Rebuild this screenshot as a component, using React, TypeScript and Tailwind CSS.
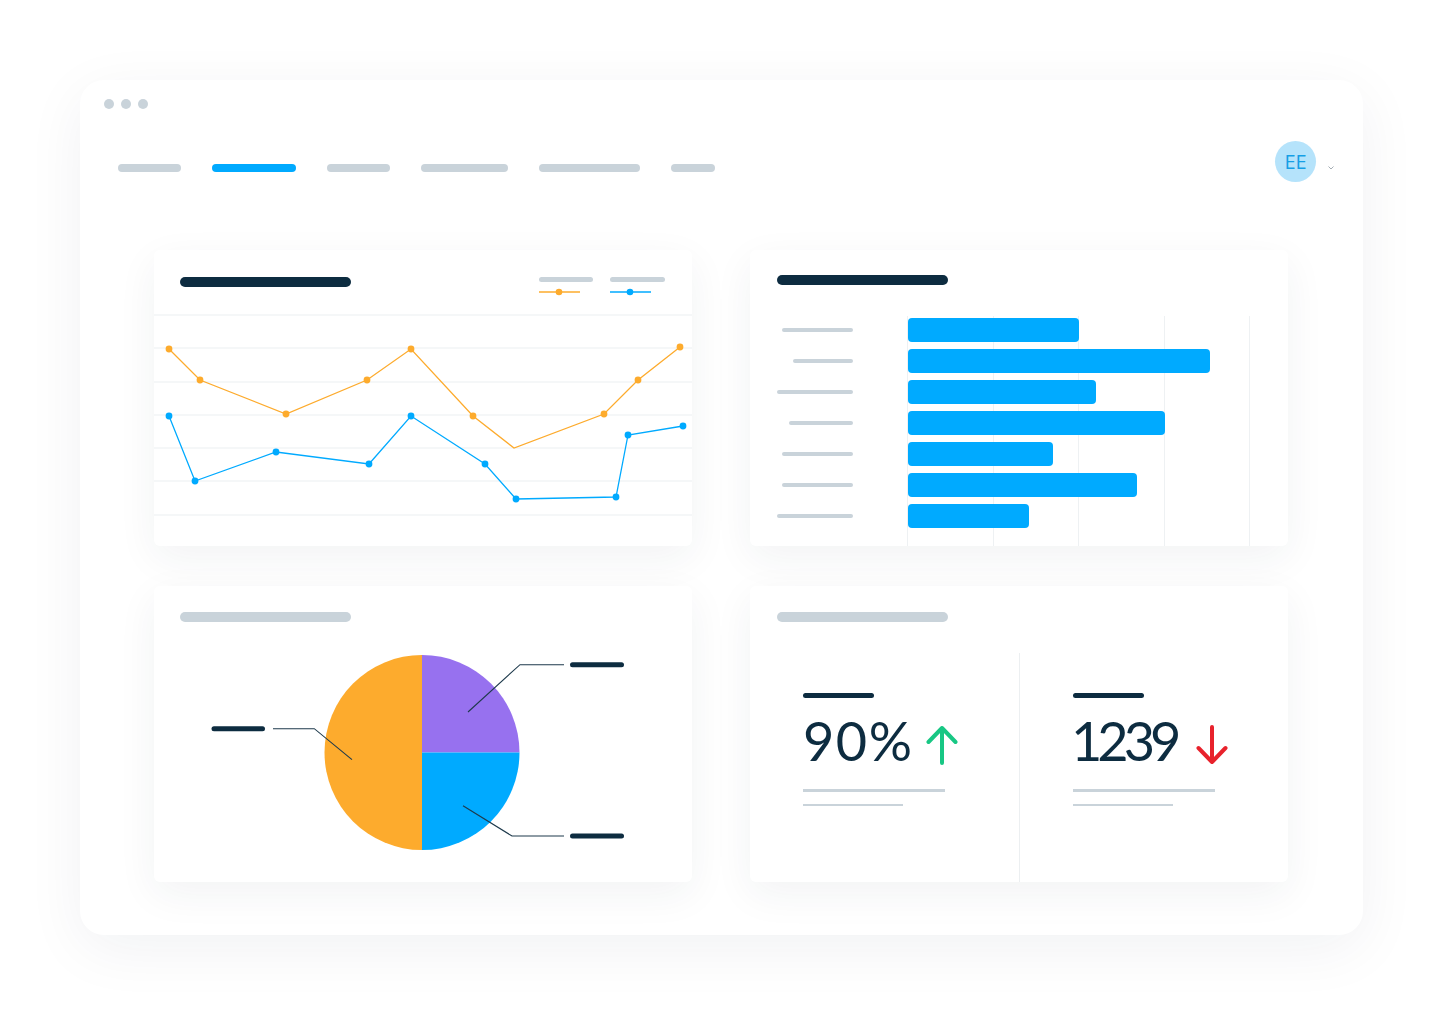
import React from "react"

const navy = "#0d2c40"
const gray = "#c9d3da"

const navBars = [63, 84, 63, 87, 101, 44]

const orange = [
  [169, 349], [200, 380], [286, 414], [367, 380], [411, 349],
  [473, 416], [514, 448], [604, 414], [638, 380], [680, 347],
]
const blue = [
  [169, 416], [195, 481], [276, 452], [369, 464], [411, 416],
  [485, 464], [516, 499], [616, 497], [628, 435], [683, 426],
]

const bars = [
  { label: 71, value: 171 },
  { label: 60, value: 302 },
  { label: 76, value: 188 },
  { label: 64, value: 257 },
  { label: 71, value: 145 },
  { label: 71, value: 229 },
  { label: 76, value: 121 },
]

function Card({ children, className = "" }: { children: React.ReactNode; className?: string }) {
  return (
    <div className={"relative h-[296px] rounded-md bg-white shadow-[0_12px_40px_rgba(30,50,70,0.06)] " + className}>
      {children}
    </div>
  )
}

function LineCard() {
  const pts = (arr: number[][]) => arr.map((p) => p.join(",")).join(" ")
  return (
    <Card className="overflow-hidden">
      <div className="flex h-[59px] items-start justify-between pl-[26px] pr-[27px] pt-[27px]">
        <div className="h-[10px] w-[171px] rounded-full" style={{ background: navy }} />
        <div className="flex gap-[17px]">
          <div className="flex flex-col gap-[6px]">
            <div className="h-[5px] w-[54px] rounded-full bg-[#c9d3da]" />
            <svg width="41" height="8" viewBox="0 0 41 8">
              <line x1="0" y1="4" x2="41" y2="4" stroke="#fdab2d" strokeWidth="1.3" />
              <circle cx="20" cy="4" r="3.3" fill="#fdab2d" />
            </svg>
          </div>
          <div className="flex flex-col gap-[6px]">
            <div className="h-[5px] w-[55px] rounded-full bg-[#c9d3da]" />
            <svg width="41" height="8" viewBox="0 0 41 8">
              <line x1="0" y1="4" x2="41" y2="4" stroke="#00aaff" strokeWidth="1.3" />
              <circle cx="20" cy="4" r="3.3" fill="#00aaff" />
            </svg>
          </div>
        </div>
      </div>
      <svg width="538" height="220" viewBox="0 0 538 220" className="block">
        <g transform="translate(-154 -309)">
          {[315, 348, 382, 415, 448, 481, 515].map((y) => (
            <line key={y} x1="154" y1={y} x2="692" y2={y} stroke="#eceff2" strokeWidth="1.2" />
          ))}
          <polyline points={pts(orange)} fill="none" stroke="#fdab2d" strokeWidth="1.3" />
          <polyline points={pts(blue)} fill="none" stroke="#00aaff" strokeWidth="1.3" />
          {orange.map(([x, y], i) => (i === 6 ? null : <circle key={"o" + i} cx={x} cy={y} r="3.4" fill="#fdab2d" />))}
          {blue.map(([x, y], i) => (
            <circle key={"b" + i} cx={x} cy={y} r="3.4" fill="#00aaff" />
          ))}
        </g>
      </svg>
    </Card>
  )
}

function BarCard() {
  return (
    <Card className="overflow-hidden">
      <div className="h-[66px] pl-[27px] pt-[25px]">
        <div className="h-[10px] w-[171px] rounded-full" style={{ background: navy }} />
      </div>
      <div className="relative h-[230px]">
        {/* grid lines behind the bars */}
        {[157, 243, 328, 414, 499].map((x) => (
          <div key={x} className="absolute bottom-0 top-0 w-px bg-[#eef1f3]" style={{ left: x }} />
        ))}
        <div className="relative flex flex-col gap-[7px] pt-[2px]">
          {bars.map((b, i) => (
            <div key={i} className="flex h-[24px] items-center">
              <div className="flex w-[103px] justify-end">
                <div className="h-[4.5px] rounded-full bg-[#c9d3da]" style={{ width: b.label }} />
              </div>
              <div className="ml-[55px] h-[24px] rounded-[4px] bg-[#00aaff]" style={{ width: b.value }} />
            </div>
          ))}
        </div>
      </div>
    </Card>
  )
}

function PieCard() {
  return (
    <Card>
      <div className="h-[50px] pl-[26px] pt-[26px]">
        <div className="h-[10px] w-[171px] rounded-full bg-[#c9d3da]" />
      </div>
      <svg width="538" height="246" viewBox="0 0 538 246" className="block">
        <g transform="translate(-154 -636)">
          <path d="M422,655 A97.5,97.5 0 0 0 422,850 Z" fill="#fdab2d" />
          <path d="M422,752.5 L422,655 A97.5,97.5 0 0 1 519.5,752.5 Z" fill="#9771ef" />
          <path d="M422,752.5 L519.5,752.5 A97.5,97.5 0 0 1 422,850 Z" fill="#00aaff" />
          <polyline points="468,712 520,664.7 564,664.7" fill="none" stroke="#1e3a4c" strokeWidth="1.1" />
          <polyline points="463,805.7 512,836 564,836" fill="none" stroke="#1e3a4c" strokeWidth="1.1" />
          <polyline points="352,759.7 314.3,728.7 273,728.7" fill="none" stroke="#1e3a4c" strokeWidth="1.1" />
          <line x1="572.5" y1="664.7" x2="621.5" y2="664.7" stroke={navy} strokeWidth="5" strokeLinecap="round" />
          <line x1="572.5" y1="836" x2="621.5" y2="836" stroke={navy} strokeWidth="5" strokeLinecap="round" />
          <line x1="214" y1="728.7" x2="262.5" y2="728.7" stroke={navy} strokeWidth="5" strokeLinecap="round" />
        </g>
      </svg>
    </Card>
  )
}

function Arrow({ up, color }: { up: boolean; color: string }) {
  return (
    <svg width="32" height="40" viewBox="0 0 32 40" className="shrink-0">
      <g transform={up ? undefined : "rotate(180 16 20)"}>
        <path d="M16 38 L16 3 M2.5 17 L16 3 L29.5 17" fill="none" stroke={color} strokeWidth="4" strokeLinecap="round" strokeLinejoin="round" />
      </g>
    </svg>
  )
}

function Stat({ value, up, tracking, gap }: { value: string; up: boolean; tracking: string; gap: string }) {
  return (
    <div className="pl-[53px] pt-[40px]">
      <div className="h-[5px] w-[71px] rounded-full" style={{ background: navy }} />
      <div className="mt-[16px] flex items-start">
        <span
          className={"text-[54px] leading-none " + tracking}
          style={{ fontFamily: "Lato, 'Noto Sans', sans-serif", color: navy }}
        >
          {value}
        </span>
        <div className={"mt-[11px] " + gap}>
          <Arrow up={up} color={up ? "#18c784" : "#e8222c"} />
        </div>
      </div>
      <div className="mt-[21px] h-[2.5px] w-[142px] bg-[#c9d3da]" />
      <div className="mt-[12px] h-[2.5px] w-[100px] bg-[#c9d3da]" />
    </div>
  )
}

function StatCard() {
  return (
    <Card>
      <div className="h-[67px] pl-[27px] pt-[26px]">
        <div className="h-[10px] w-[171px] rounded-full bg-[#c9d3da]" />
      </div>
      <div className="grid h-[229px] grid-cols-2">
        <Stat value="90%" up tracking="tracking-[1.5px]" gap="ml-[13px]" />
        <div className="border-l border-[#eceff1]">
          <Stat value="1239" up={false} tracking="tracking-[-5px] -ml-[2px]" gap="ml-[20px]" />
        </div>
      </div>
    </Card>
  )
}

export default function App() {
  return (
    <div className="h-[1016px] w-[1444px] overflow-hidden bg-white pt-[80px]" style={{ fontFamily: "'Open Sans', sans-serif" }}>
      <div className="ml-[80px] h-[855px] w-[1283px] rounded-[24px] bg-white shadow-[0_14px_60px_rgba(20,40,60,0.06)]">
        <div className="flex gap-[7px] pl-[24px] pt-[19px]">
          <div className="h-[10px] w-[10px] rounded-full bg-[#c9d3da]" />
          <div className="h-[10px] w-[10px] rounded-full bg-[#c9d3da]" />
          <div className="h-[10px] w-[10px] rounded-full bg-[#c9d3da]" />
        </div>

        <div className="mt-[32px] flex items-start justify-between pl-[38px] pr-[29px]">
          <div className="mt-[22.5px] flex gap-[31px]">
            {navBars.map((w, i) => (
              <div
                key={i}
                className={"h-[8px] rounded-full " + (i === 1 ? "bg-[#00aaff]" : "bg-[#c9d3da]")}
                style={{ width: w }}
              />
            ))}
          </div>
          <div className="flex items-start">
            <div className="flex h-[41px] w-[41px] items-center justify-center rounded-full bg-[#b5e3fb] text-[20px] text-[#159fe6]">
              EE
            </div>
            <svg width="6" height="4" viewBox="0 0 6 4" className="ml-[12px] mt-[25px]">
              <path d="M0.5 0.5 L3 3 L5.5 0.5" fill="none" stroke="#9aa4ac" strokeWidth="0.9" />
            </svg>
          </div>
        </div>

        <div className="mt-[68px] grid grid-cols-[538px_538px] gap-x-[58px] gap-y-[40px] pl-[74px]">
          <LineCard />
          <BarCard />
          <PieCard />
          <StatCard />
        </div>
      </div>
    </div>
  )
}
